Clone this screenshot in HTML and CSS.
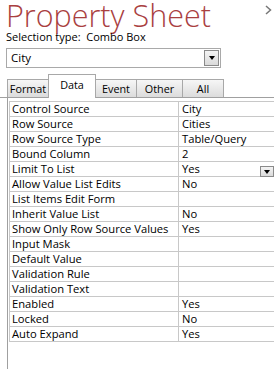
FILE: index.html
```html
<!DOCTYPE html>
<html lang="en">
<head>
    <meta charset="UTF-8">
    <title>Property Sheet</title>
    <link rel="stylesheet" href="styles.css">
</head>
<body>
    <div class="header">
        <h1 class="title">Property Sheet</h1>
        <svg class="close" width="7" height="10" viewBox="0 0 7 10"><path d="M1 1 L5.5 5 L1 9" fill="none" stroke="#777" stroke-width="1.5"/></svg>
    </div>
    <div class="selection">Selection type:&nbsp; Combo Box</div>

    <div class="combo">
        <span class="combo-text">City</span>
        <div class="drop-btn"><span class="arrow"></span></div>
    </div>

    <div class="tabs">
        <div class="tab">Format</div>
        <div class="tab active">Data</div>
        <div class="tab">Event</div>
        <div class="tab">Other</div>
        <div class="tab">All</div>
    </div>

    <div class="panel">
        <div class="props">
            <div class="row"><div class="name">Control Source</div><div class="val">City</div></div>
            <div class="row"><div class="name">Row Source</div><div class="val">Cities</div></div>
            <div class="row"><div class="name">Row Source Type</div><div class="val">Table/Query</div></div>
            <div class="row"><div class="name">Bound Column</div><div class="val">2</div></div>
            <div class="row"><div class="name">Limit To List</div><div class="val">Yes<div class="drop-btn small"><span class="arrow"></span></div></div></div>
            <div class="row"><div class="name">Allow Value List Edits</div><div class="val">No</div></div>
            <div class="row"><div class="name">List Items Edit Form</div><div class="val"></div></div>
            <div class="row"><div class="name">Inherit Value List</div><div class="val">No</div></div>
            <div class="row"><div class="name">Show Only Row Source Values</div><div class="val">Yes</div></div>
            <div class="row"><div class="name">Input Mask</div><div class="val"></div></div>
            <div class="row"><div class="name">Default Value</div><div class="val"></div></div>
            <div class="row"><div class="name">Validation Rule</div><div class="val"></div></div>
            <div class="row"><div class="name">Validation Text</div><div class="val"></div></div>
            <div class="row"><div class="name">Enabled</div><div class="val">Yes</div></div>
            <div class="row"><div class="name">Locked</div><div class="val">No</div></div>
            <div class="row"><div class="name">Auto Expand</div><div class="val">Yes</div></div>
        </div>
    </div>
</body>
</html>
```

FILE: styles.css
```css
html, body { height: 100%; }
body {
    margin: 0;
    background: #fff;
    font-family: "Open Sans", "Noto Sans", sans-serif;
    font-size: 11.2px;
    color: #000;
    overflow: hidden;
}

.header {
    display: flex;
    justify-content: space-between;
    align-items: flex-start;
    padding: 0 2px 0 6px;
    height: 30px;
}

.title {
    margin: 0;
    font-weight: 300;
    font-size: 30.5px;
    line-height: 30px;
    color: #a9403f;
    white-space: nowrap;
}

.close { margin-top: 5px; }

.selection {
    padding-left: 6px;
    font-size: 11px;
    line-height: 14px;
}

/* combo box at top */
.combo {
    display: flex;
    align-items: center;
    margin: 4px 0 0 6px;
    width: 209px;
    height: 18px;
    border: 1px solid #a9a9a9;
    padding-left: 4px;
}

.combo-text { flex: 1; line-height: 18px; font-size: 11.5px; }

.drop-btn {
    width: 13px;
    height: 14px;
    border: 1px solid #8a8a8a;
    background: linear-gradient(#f4f4f4, #dadada);
    display: flex;
    align-items: center;
    justify-content: center;
    margin-right: 1px;
}

.arrow {
    width: 0;
    height: 0;
    border-left: 3px solid transparent;
    border-right: 3px solid transparent;
    border-top: 4px solid #000;
}

/* tabs */
.tabs {
    display: flex;
    align-items: flex-end;
    margin-top: 6px;
    padding-left: 7px;
    border-bottom: 1px solid #a0a0a0;
    height: 23px;
}

.tab {
    width: 40px;
    height: 17px;
    line-height: 17px;
    text-align: center;
    border: 1px solid #a8a8a8;
    border-bottom: none;
    background: linear-gradient(#f6f6f6, #dcdcdc);
    font-size: 10.8px;
    margin-right: -1px;
}

.tab:nth-child(4) { width: 45px; }

.tab.active {
    width: 46px;
    height: 23px;
    line-height: 19px;
    background: #fff;
    margin-bottom: -1px;
    position: relative;
    z-index: 1;
}

/* property grid */
.panel {
    margin-left: 7px;
    border-left: 1px solid #a0a0a0;
    height: 300px;
    padding: 3px 0 0 1px;
}

.props {
    width: 280px;
    border-top: 1px solid #c8c8c8;
    border-left: 1px solid #c8c8c8;
}

.row {
    display: flex;
    height: 14px;
    border-bottom: 1px solid #c8c8c8;
    line-height: 14px;
    white-space: nowrap;
}

.name {
    width: 166px;
    padding-left: 2px;
    border-right: 1px solid #c8c8c8;
    overflow: hidden;
}

.val {
    flex: 1;
    padding-left: 3px;
    position: relative;
}

.drop-btn.small {
    position: absolute;
    top: 4px;
    left: 81px;
    width: 12px;
    height: 9px;
}
```
